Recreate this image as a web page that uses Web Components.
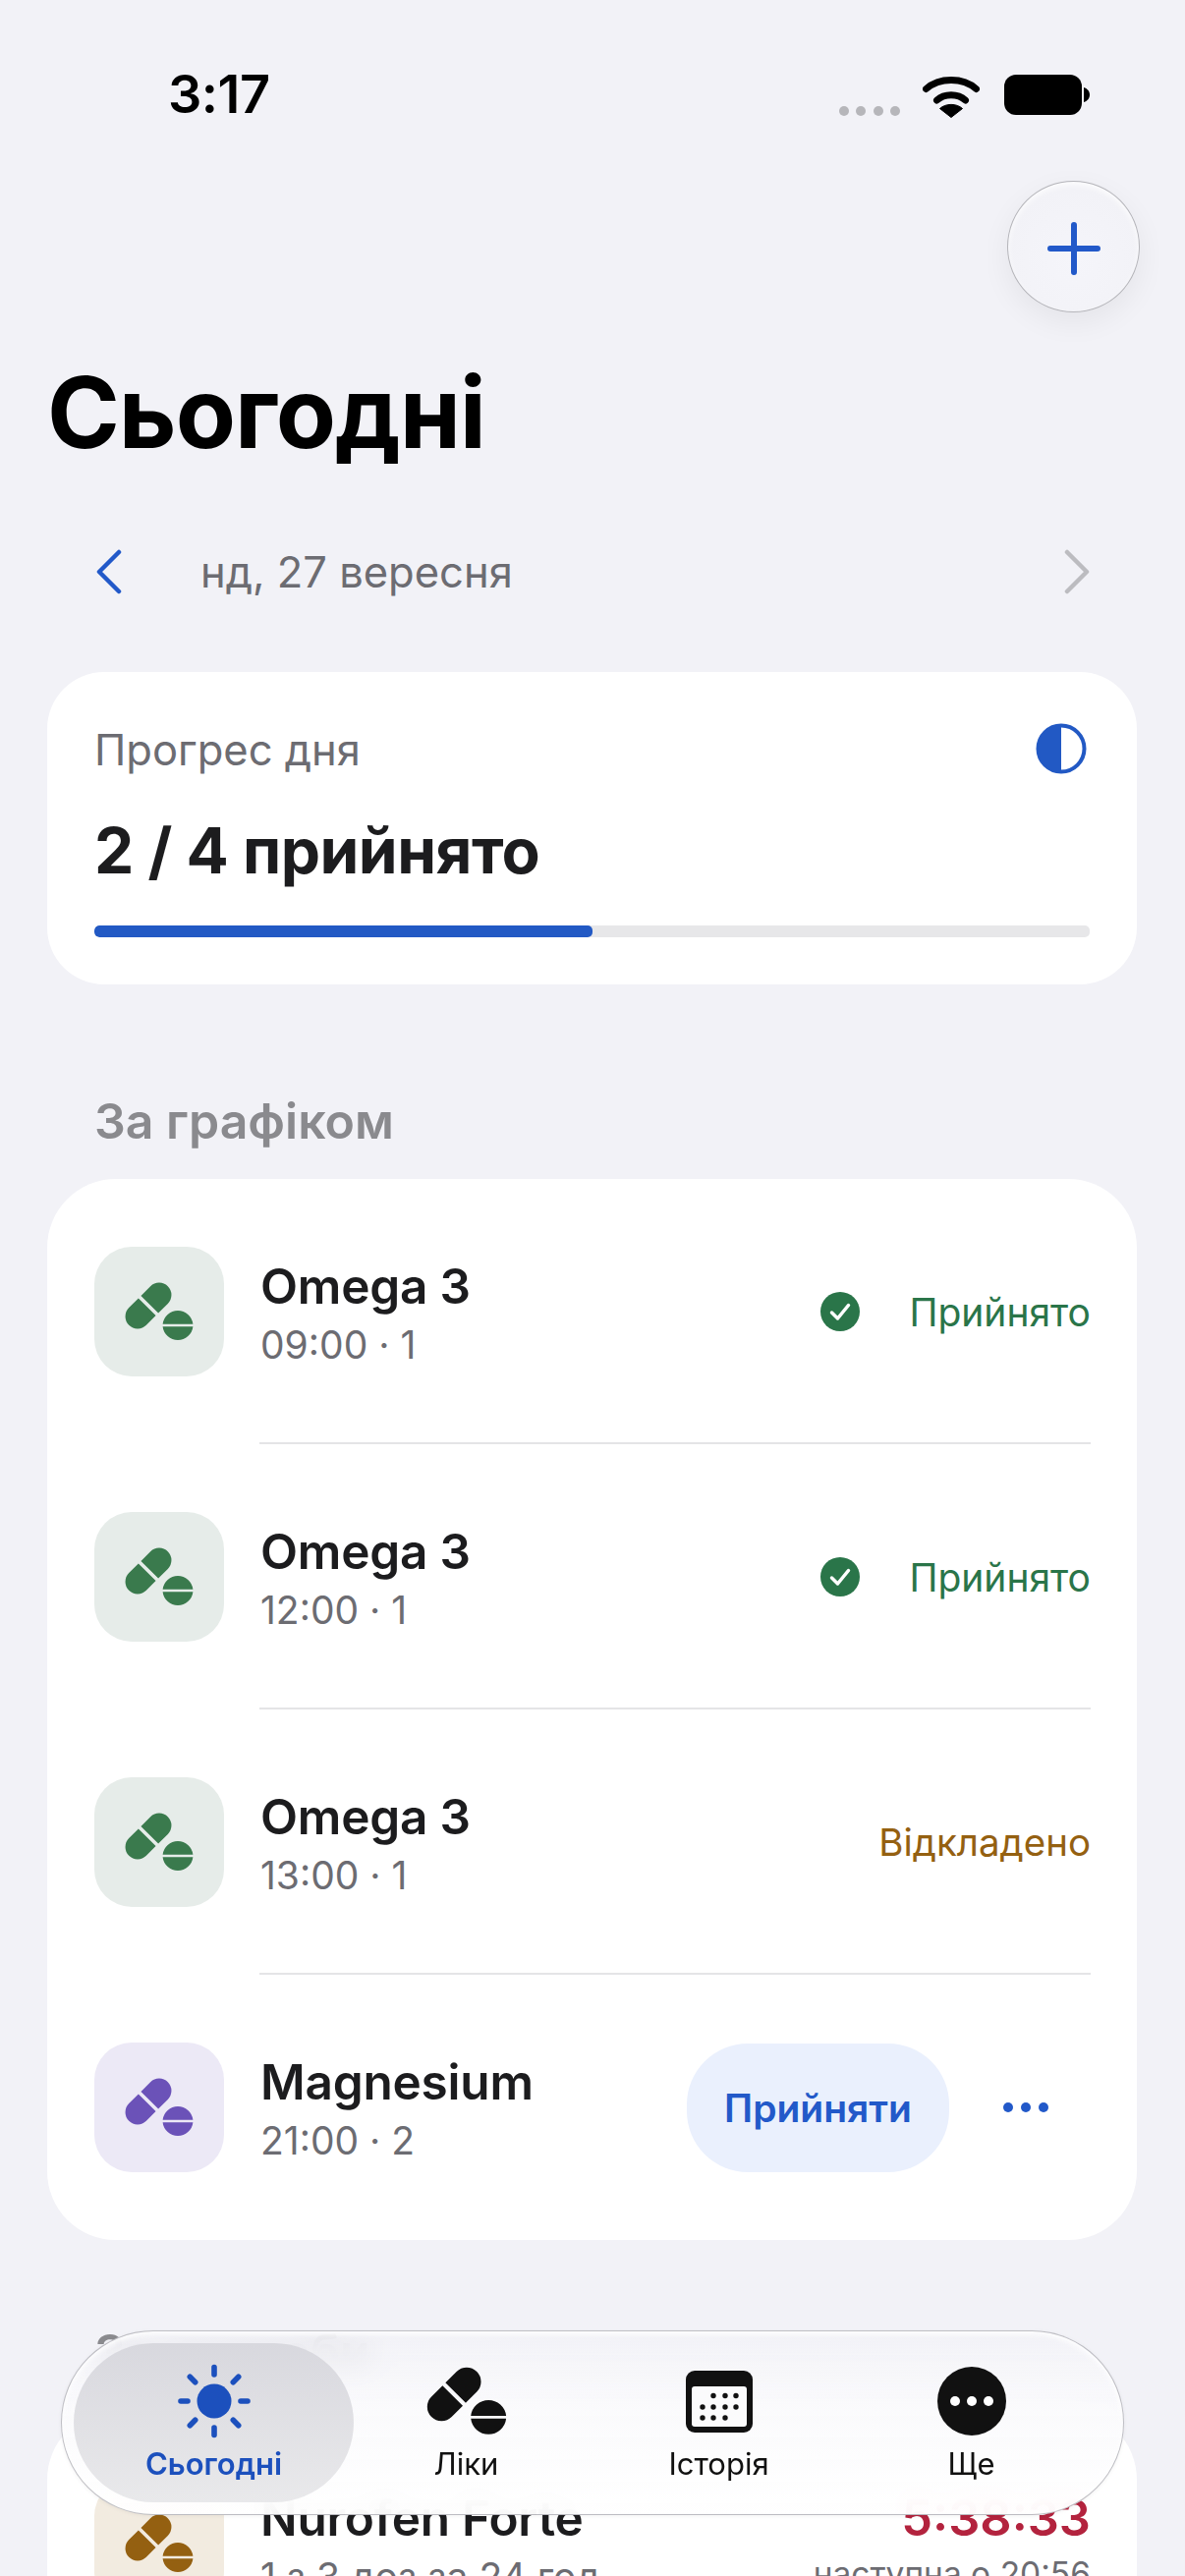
<!DOCTYPE html>
<html lang="uk"><head><meta charset="utf-8"><title>Сьогодні</title>
<style>
html,body{margin:0;padding:0;background:#f2f2f7}
body{width:1206px;height:2622px;overflow:hidden;font-family:Inter,"Noto Sans",sans-serif}
</style></head><body>
<today-screen></today-screen>
<script>
const PILL_D='<path d="M22.200 11.500H8.500a12.500 12.500 0 0 0 0 25H22.200Z M25.800 11.500H39.500a12.500 12.500 0 0 1 0 25H25.800Z" transform="rotate(-45 24 24)"/><path d="M38.600 42.800A15.500 15.500 0 0 1 69.400 42.800Z M38.600 45.200A15.500 15.500 0 0 0 69.400 45.200Z"/>';
const PILL=`<svg class="pill" viewBox="0 0 70 60" aria-hidden="true">${PILL_D}</svg>`;
function def(name,css,html,setup){
  customElements.define(name,class extends HTMLElement{
    connectedCallback(){
      if(this.shadowRoot)return;
      const r=this.attachShadow({mode:'open'});
      r.innerHTML=`<style>${css}</style>`+(typeof html==='function'?html(this):html);
      if(setup)setup(this,r);
    }
  });
}
def('status-bar',`
:host{display:flex;align-items:flex-start;height:184px;box-sizing:border-box;padding:68px 97px 0 171px;color:#000}
.t{font-size:54px;font-weight:600;line-height:56px;letter-spacing:-.5px;flex:1}
.dots{display:flex;gap:7.300px;margin:40px 23px 0 0}
.dots i{width:10px;height:10px;border-radius:50%;background:#b6b6ba}
svg{display:block}
.w{margin:8px 25px 0 0}
.b{margin:8px 0 0 0}
`,`<span class="t">3:17</span><span class="dots"><i></i><i></i><i></i><i></i></span>
<svg class="w" width="58" height="44" viewBox="0 0 58 44"><path d="M3.5 14.5C17 2.500 41 2.500 54.500 14.500" fill="none" stroke="#000" stroke-width="7" stroke-linecap="round"/><path d="M14.500 26C22 19 36 19 43.500 26" fill="none" stroke="#000" stroke-width="7" stroke-linecap="round"/><path d="M29 43.500L17.500 34.500C23.500 29 34.500 29 40.500 34.500Z" stroke="#000" stroke-linejoin="round" stroke-width="1"/></svg>
<svg class="b" width="87" height="41" viewBox="0 0 87 41"><rect width="79" height="41" rx="12"/><path d="M81 13c3.500 1 6 4 6 7.500S84.500 27 81 28Z"/></svg>`);

def('add-button',`
:host{display:flex;justify-content:flex-end;padding-right:46px}
.b{width:135px;height:134px;box-sizing:border-box;border-radius:50%;display:grid;place-items:center;background:radial-gradient(circle at 50% 60%,#f5f5fa 0,#f2f2f7 70%,#f7f7fa 100%);border:1.500px solid #b5b5ba;box-shadow:0 10px 30px rgba(0,0,0,.06),inset 0 3px 6px rgba(255,255,255,.8)}
svg{display:block;margin-top:4px}
`,`<div class="b"><svg width="54" height="54" viewBox="0 0 54 54"><path d="M27 3V51M3 27H51" stroke="#2259c9" stroke-width="6" stroke-linecap="round"/></svg></div>`);

def('page-title',`
:host{display:block;padding:0 0 0 48px;margin-top:42px}
h1{margin:0;font-size:100px;line-height:120px;font-weight:700;letter-spacing:-1.100px;color:#000}
`,`<h1><slot></slot></h1>`);

def('date-nav',`
:host{display:flex;align-items:center;height:76px;margin:64px 0 0;padding:0 97px 0 98px;font-size:43.500px;color:#6c6c72}
svg{display:block}
span{flex:1;padding-left:80px}
`,`<svg width="26" height="46" viewBox="0 0 26 46"><path d="M23 3L3 23L23 43" fill="none" stroke="#2259c9" stroke-width="4.500" stroke-linecap="round" stroke-linejoin="round"/></svg><span><slot></slot></span><svg width="26" height="46" viewBox="0 0 26 46"><path d="M3 3L23 23L3 43" fill="none" stroke="#bcbcc0" stroke-width="4.500" stroke-linecap="round" stroke-linejoin="round"/></svg>`);

def('progress-card',`
:host{display:block;margin:64px 49px 0 48px;box-sizing:border-box;height:318px;background:#fff;border-radius:58px;padding:48px 48px 0}
.top{display:flex;justify-content:space-between;align-items:center;height:62px}
.l{font-size:43.500px;color:#6c6c72}
.v{font-size:64px;font-weight:700;line-height:74px;color:#1c1c1e;margin-top:35px;letter-spacing:-.5px}
.bar{height:12px;border-radius:5px;background:#e7e7e9;margin-top:39px;overflow:hidden}
.bar i{display:block;height:100%;width:50%;background:#2259c4;border-radius:5px}
svg{display:block;margin:-2px 3px 0 0}
`,`<div class="top"><span class="l">Прогрес дня</span><svg width="52" height="52" viewBox="0 0 52 52"><circle cx="26" cy="26" r="23.500" fill="#fff" stroke="#2259c4" stroke-width="4"/><path d="M26 2.500A23.500 23.500 0 0 0 26 49.500Z" fill="#2259c4"/></svg></div><div class="v">2 / 4 прийнято</div><div class="bar"><i></i></div>`);

def('section-label',`
:host{display:block;padding-left:96px;font-size:50px;font-weight:600;line-height:60px;color:#8a8a8e}
`,`<slot></slot>`);

def('list-card',`
:host{display:block;margin:0 49px 0 48px;background:#fff;border-radius:70px}
`,`<slot></slot>`);

def('dose-row',`
:host{display:flex;align-items:center;height:270px;box-sizing:border-box;padding:0 47px 0 48px;position:relative}
:host([sep]) .line{display:block}
.line{display:none;position:absolute;left:216px;right:47px;bottom:0;height:2px;background:#e4e4e6}
.ic{width:132px;height:132px;border-radius:38px;display:grid;place-items:center;background:var(--ibg);flex:none}
.pill{width:70px;height:60px;display:block;fill:var(--ifg)}
.txt{flex:1;padding:3px 0 0 37px;min-width:0}
.n{font-size:49.500px;font-weight:600;line-height:56px;color:#1c1c1e;letter-spacing:-.2px}
.s{font-size:39px;line-height:46px;color:#6c6c72;margin-top:9px}
.end{display:flex;align-items:center}
`,t=>`<div class="ic">${PILL}</div><div class="txt"><div class="n">${t.getAttribute('name')}</div><div class="s">${t.getAttribute('sub')}</div></div><div class="end"><slot></slot></div><div class="line"></div>`,
(el)=>{const m={green:['#e6ece9','#3a7a4d'],purple:['#ece9f6','#6b52b8'],brown:['#f2ebe0','#946011']}[el.getAttribute('tone')];el.style.setProperty('--ibg',m[0]);el.style.setProperty('--ifg',m[1]);});

def('taken-status',`
:host{display:flex;align-items:center;font-size:39px;color:#2a7549}
svg{display:block;margin-right:50px}
`,`<svg width="40" height="40" viewBox="0 0 40 40"><circle cx="20" cy="20" r="20" fill="#2a7549"/><path d="M11.500 21L17.500 27L28.500 13.500" fill="none" stroke="#fff" stroke-width="3.500" stroke-linecap="round" stroke-linejoin="round"/></svg><slot></slot>`);

def('late-status',`:host{display:block;font-size:38.500px;color:#946011}`,`<slot></slot>`);

def('take-action',`
:host{display:flex;align-items:center}
.b{width:267px;height:131px;border-radius:62px;background:#eaf0fd;color:#2259c9;font-size:39px;font-weight:600;display:grid;place-items:center}
svg{display:block;margin:0 42px 0 54px}
`,`<div class="b"><slot></slot></div><svg width="48" height="12" viewBox="0 0 48 12"><g fill="#2259c9"><circle cx="6" cy="6" r="5"/><circle cx="24" cy="6" r="5"/><circle cx="42" cy="6" r="5"/></g></svg>`);

def('timer-status',`
:host{display:block;text-align:right}
.a{font-size:50.500px;font-weight:600;line-height:56px;color:#b3233e}
.b{font-size:33.500px;line-height:46px;color:#6c6c72;margin-top:6px}
`,`<div class="a"><slot name="a"></slot></div><div class="b"><slot name="b"></slot></div>`);

def('tab-item',`
:host{display:flex;flex-direction:column;align-items:center;flex:1 1 0;position:relative;font-size:31px;line-height:36px;color:#111;height:162px;box-sizing:border-box;padding-top:21px}
:host([active]){color:#1c50bd;font-weight:600}
:host([active])::before{content:"";position:absolute;left:-14px;right:-14px;top:0;bottom:0;border-radius:81px/81px;background:linear-gradient(180deg,#d8d8de,#e9e9eb)}
.i{height:76px;display:flex;align-items:center;justify-content:center;position:relative}
.t{position:relative;margin-top:8px}
::slotted(svg){display:block}
`,`<div class="i"><slot></slot></div><div class="t"><slot name="label"></slot></div>`);

def('tab-bar',`
:host{display:flex;position:absolute;left:62px;top:2372px;width:1082px;height:188px;box-sizing:border-box;padding:12px 26px 13px;border-radius:94px;background:linear-gradient(180deg,rgba(242,242,247,.82) 0,rgba(250,250,252,.92) 40%,rgba(255,255,255,.94) 100%);-webkit-backdrop-filter:blur(14px);backdrop-filter:blur(14px);border:1.500px solid rgba(170,170,176,.75);box-shadow:inset 0 3px 5px rgba(255,255,255,.9),0 1px 4px rgba(0,0,0,.05)}
`,`<slot></slot>`);

def('today-screen',`
:host{display:block;position:relative;width:1206px;height:2622px;overflow:hidden;background:#f2f2f7}
.s1{margin-top:109px}
.c1{margin-top:29px;display:block}
.s2{margin-top:84px}
.c2{margin-top:30px;display:block}
`,`<status-bar></status-bar><add-button></add-button>
<page-title>Сьогодні</page-title>
<date-nav>нд, 27 вересня</date-nav>
<progress-card></progress-card>
<section-label class="s1">За графіком</section-label>
<list-card class="c1">
<dose-row tone="green" name="Omega 3" sub="09:00 · 1" sep><taken-status>Прийнято</taken-status></dose-row>
<dose-row tone="green" name="Omega 3" sub="12:00 · 1" sep><taken-status>Прийнято</taken-status></dose-row>
<dose-row tone="green" name="Omega 3" sub="13:00 · 1" sep><late-status>Відкладено</late-status></dose-row>
<dose-row tone="purple" name="Magnesium" sub="21:00 · 2"><take-action>Прийняти</take-action></dose-row>
</list-card>
<section-label class="s2">За потреби</section-label>
<list-card class="c2">
<dose-row tone="brown" name="Nurofen Forte" sub="1 з 3 доз за 24 год"><timer-status><span slot="a">5:38:33</span><span slot="b">наступна о 20:56</span></timer-status></dose-row>
</list-card>
<tab-bar>
<tab-item active><svg width="74" height="76" viewBox="0 0 74 76"><circle cx="37" cy="38" r="17.500" fill="#1c50bd"/><g stroke="#1c50bd" stroke-width="5.600" stroke-linecap="round"><path d="M37 3.500V11M37 65V72.500M3 38H10M64 38H71M12.300 13.300L17.700 18.700M56.300 57.300L61.700 62.700M61.700 13.300L56.300 18.700M17.700 57.300L12.300 62.700"/></g></svg><span slot="label">Сьогодні</span></tab-item>
<tab-item><svg width="82" height="70" viewBox="0 0 70 60" fill="#111">${PILL_D}</svg><span slot="label">Ліки</span></tab-item>
<tab-item><svg width="68" height="63" viewBox="0 0 68 63"><rect width="68" height="63" rx="9" fill="#111"/><rect x="6" y="16" width="56" height="41" rx="3" fill="#fbfbfc"/><g fill="#111"><circle cx="28" cy="25.500" r="2.700"/><circle cx="40" cy="25.500" r="2.700"/><circle cx="51" cy="25.500" r="2.700"/><circle cx="17" cy="37" r="2.700"/><circle cx="28" cy="37" r="2.700"/><circle cx="40" cy="37" r="2.700"/><circle cx="51" cy="37" r="2.700"/><circle cx="17" cy="48" r="2.700"/><circle cx="28" cy="48" r="2.700"/><circle cx="40" cy="48" r="2.700"/></g></svg><span slot="label">Історія</span></tab-item>
<tab-item><svg width="70" height="70" viewBox="0 0 70 70"><circle cx="35" cy="35" r="35" fill="#111"/><g fill="#fff"><circle cx="18" cy="35" r="5"/><circle cx="35" cy="35" r="5"/><circle cx="52" cy="35" r="5"/></g></svg><span slot="label">Ще</span></tab-item>
</tab-bar>`);
</script>
</body></html>
